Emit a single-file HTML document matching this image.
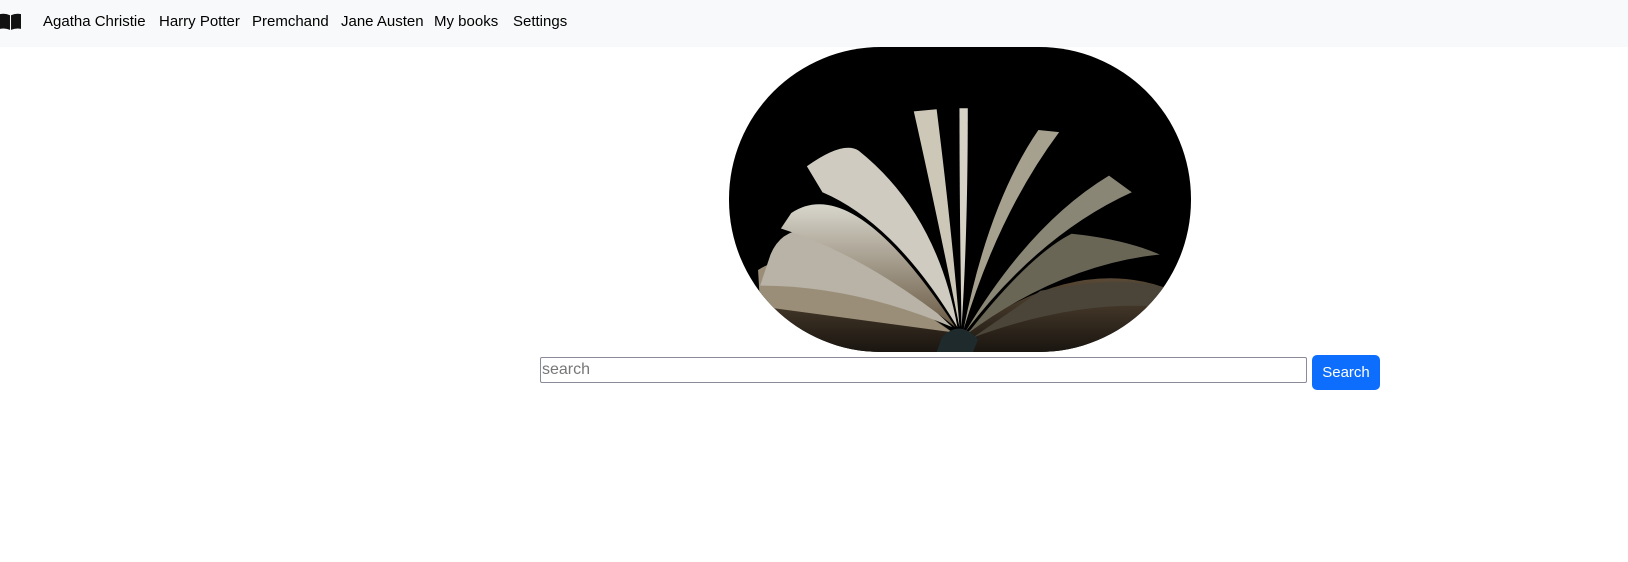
<!DOCTYPE html>
<html><head><meta charset="utf-8"><style>
body{margin:0;width:1628px;height:562px;background:#fff;font-family:"Liberation Sans",sans-serif;overflow:hidden;position:relative}
nav{position:absolute;left:0;top:0;width:1628px;height:47px;background:#f8f9fa}
nav a{position:absolute;top:13px;font-size:15px;color:#000;text-decoration:none}
.img{position:absolute;left:729px;top:47px;width:462px;height:305px;border-radius:152px;overflow:hidden;background:#000}
input{position:absolute;left:540px;top:357px;width:767px;height:26px;box-sizing:border-box;border:1px solid #8a8a99;font-size:16px;padding:0 1px;font-family:"Liberation Sans",sans-serif;border-radius:2px}
input::placeholder{color:#777}
.btn{position:absolute;left:1312px;top:355px;width:68px;height:35px;background:#0d6efd;color:#fff;border-radius:5px;font-size:15px;line-height:35px;text-align:center}
</style></head><body>
<nav>
<svg style="position:absolute;left:0;top:13px" width="21" height="17" viewBox="0 0 20 16"><path d="M0 1 Q5 0 9.5 2 V16 Q5 14 0 15Z M10.5 2 Q15 0 20 1 V15 Q15 14 10.5 16Z" fill="#111"/></svg>
<a style="left:43px">Agatha Christie</a>
<a style="left:159px">Harry Potter</a>
<a style="left:252px">Premchand</a>
<a style="left:341px">Jane Austen</a>
<a style="left:434px">My books</a>
<a style="left:513px">Settings</a>
</nav>
<div class="img"><svg width="462" height="305" viewBox="0 0 445 294" preserveAspectRatio="none">
<defs><linearGradient id="g" x1="0" y1="0" x2="0" y2="1"><stop offset="0" stop-color="#d8d6cc"/><stop offset="1" stop-color="#6a5a44"/></linearGradient>
<linearGradient id="b" x1="0" y1="0" x2="0" y2="1"><stop offset="0" stop-color="#5a4a36"/><stop offset="1" stop-color="#1a1510"/></linearGradient></defs>
<path d="M30 230 Q120 200 222 280 Q330 200 420 232 L430 294 L20 294Z" fill="url(#b)"/>
<path d="M28 215 Q80 180 215 275 L30 250Z" fill="#9a8e78"/>
<path d="M40 200 Q70 130 215 270 Q120 230 30 230Z" fill="#b8b3a6"/>
<path d="M60 160 Q120 120 218 270 Q130 200 50 175Z" fill="url(#g)"/>
<path d="M75 115 Q110 90 125 100 Q200 160 220 270 Q160 170 90 140Z" fill="#cfcbc0"/>
<path d="M178 62 L200 60 Q215 180 222 270 Q200 160 178 62Z" fill="#cdc7b8"/>
<path d="M222 59 L230 59 Q230 180 224 270 Q222 160 222 59Z" fill="#d6d2c6"/>
<path d="M298 80 L318 82 Q260 160 226 272 Q250 150 298 80Z" fill="#a6a18f"/>
<path d="M366 124 L388 140 Q300 180 228 274 Q290 170 366 124Z" fill="#8a8675"/>
<path d="M330 180 Q380 185 415 200 Q320 210 230 276 Q290 200 330 180Z" fill="#6a6656"/>
<path d="M300 235 Q380 220 420 232 L410 250 Q330 245 235 280Z" fill="#4a4538"/>
<path d="M205 280 Q222 262 240 282 L235 294 L200 294Z" fill="#1e2a2c"/>
</svg></div>
<input placeholder="search">
<div class="btn">Search</div>
</body></html>
